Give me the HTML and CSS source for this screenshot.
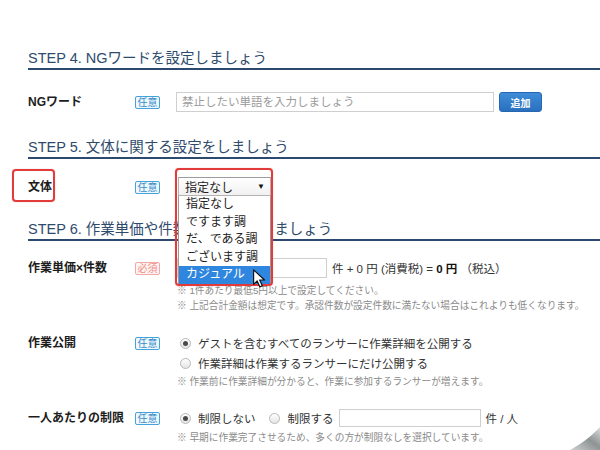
FILE: index.html
```html
<!DOCTYPE html>
<html lang="ja">
<head>
<meta charset="utf-8">
<title>STEP</title>
<link rel="stylesheet" href="styles.css">
</head>
<body>
<div class="page">
  <h2 class="step-title">STEP 4. NGワードを設定しましょう</h2>
  <div class="row row-ng">
    <div class="label">NGワード</div>
    <div class="badge-cell"><span class="badge">任意</span></div>
    <div class="field-line">
      <input class="text-input ng-input" type="text" placeholder="禁止したい単語を入力しましょう">
      <button class="btn-add" type="button">追加</button>
    </div>
  </div>

  <h2 class="step-title step-5">STEP 5. 文体に関する設定をしましょう</h2>
  <div class="row row-style">
    <div class="label">文体<span class="annot annot-label"></span></div>
    <div class="badge-cell"><span class="badge">任意</span></div>
    <div class="select-wrap">
      <div class="select"><span>指定なし</span><span class="caret">▼</span></div>
      <ul class="options">
        <li class="option">指定なし</li>
        <li class="option">ですます調</li>
        <li class="option">だ、である調</li>
        <li class="option">ございます調</li>
        <li class="option active">カジュアル</li>
      </ul>
      <span class="annot annot-select"></span>
      <svg class="cursor" width="14" height="21" viewBox="0 0 13 19"><path d="M1.5 1.5 L1.5 15 L4.8 11.8 L7.3 17.3 L9.6 16.3 L7.1 10.9 L11.6 10.9 Z" fill="#fff" stroke="#111" stroke-width="1.1" stroke-linejoin="round"/></svg>
    </div>
  </div>

  <h2 class="step-title step-6"><span class="title-left">STEP 6. 作業単価や件数</span><span class="title-hidden">などを設定し</span><span>ましょう</span></h2>
  <div class="row row-price">
    <div class="label">作業単価×件数</div>
    <div class="badge-cell"><span class="badge req">必須</span></div>
    <div class="field">
      <div class="field-line">
        <input class="text-input price-input" type="text">
        <span class="price-text">件 + 0 円 (消費税) = <b>0 円</b> （税込）</span>
      </div>
      <p class="note note-first">※ 1件あたり最低5円以上で設定してください。</p>
      <p class="note">※ 上記合計金額は想定です。承認件数が設定件数に満たない場合はこれよりも低くなります。</p>
    </div>
  </div>

  <div class="row row-public">
    <div class="label">作業公開</div>
    <div class="badge-cell"><span class="badge">任意</span></div>
    <div class="field">
      <div class="radio-line"><span class="radio on"></span>ゲストを含むすべてのランサーに作業詳細を公開する</div>
      <div class="radio-line"><span class="radio"></span>作業詳細は作業するランサーにだけ公開する</div>
      <p class="note note-tight">※ 作業前に作業詳細が分かると、作業に参加するランサーが増えます。</p>
    </div>
  </div>

  <div class="row row-limit">
    <div class="label">一人あたりの制限</div>
    <div class="badge-cell"><span class="badge">任意</span></div>
    <div class="field">
      <div class="radio-line">
        <span class="radio on"></span><span>制限しない</span>
        <span class="radio radio-second"></span><span>制限する</span>
        <input class="text-input limit-input" type="text">
        <span class="unit">件 / 人</span>
      </div>
      <p class="note note-limit">※ 早期に作業完了させるため、多くの方が制限なしを選択しています。</p>
    </div>
  </div>
</div>
<svg class="curl" width="31" height="23" viewBox="0 0 31 23">
  <defs>
    <linearGradient id="cg" x1="0" y1="1" x2="1" y2="0">
      <stop offset="0" stop-color="#cfd2d2"/>
      <stop offset="0.55" stop-color="#8e9393"/>
      <stop offset="1" stop-color="#dcdede"/>
    </linearGradient>
  </defs>
  <path d="M1 23 Q18 14 31 0 L31 23 Z" fill="url(#cg)"/>
</svg>
</body>
</html>
```

FILE: styles.css
```css
html, body {
  margin: 0;
  background: #fff;
}

body {
  font-family: "Liberation Sans", "Noto Sans CJK JP", sans-serif;
  font-size: 11.5px;
  color: #333;
  overflow: hidden;
}

.page {
  padding: 48px 0 0 28px;
}

.step-title {
  margin: 0;
  font-weight: normal;
  font-size: 14.5px;
  line-height: 20px;
  color: #2f4b6c;
  border-bottom: 2px solid #2c4a70;
  white-space: nowrap;
}

.title-hidden {
  visibility: hidden;
}

.step-5 { margin-top: 25px; }
.step-6 { margin-top: 22px; }

.row {
  display: grid;
  grid-template-columns: 107px 42px 1fr;
  align-items: start;
}

.row-ng { margin-top: 22px; }
.row-style { margin-top: 18px; position: relative; z-index: 5; }
.row-price { margin-top: 17px; }
.row-public { margin-top: 20px; }
.row-limit { margin-top: 19px; }

.label {
  position: relative;
  font-weight: bold;
  font-size: 12px;
  line-height: 20px;
  color: #1c1c1c;
  white-space: nowrap;
}

.badge-cell {
  height: 20px;
  display: flex;
  align-items: center;
}

.badge {
  display: inline-block;
  font-size: 10px;
  line-height: 11px;
  padding: 0 1.5px;
  border: 1.5px solid #45a2da;
  border-radius: 2px;
  color: #3a8cc9;
  background: #eff8fd;
}

.badge.req {
  border-color: #f2aaa3;
  color: #ee8e85;
  background: #fff4f3;
}

.field-line {
  display: flex;
  align-items: center;
  height: 20px;
}

.text-input {
  box-sizing: border-box;
  height: 20px;
  margin: 0;
  border: 1px solid #cfcfcf;
  padding: 0 5px;
  font-family: inherit;
  font-size: 11.5px;
  color: #333;
  background: #fff;
  outline: none;
}

.text-input::placeholder {
  color: #9a9a9a;
}

.ng-input {
  width: 318px;
  margin-left: -1px;
}

.btn-add {
  margin-left: 5px;
  width: 43px;
  height: 20px;
  padding: 0;
  border: 1px solid #2567b1;
  border-radius: 3px;
  background: linear-gradient(#3f8cd8, #2a70bf);
  color: #fff;
  font-family: inherit;
  font-size: 10px;
  font-weight: bold;
}

/* select + open list */
.select-wrap {
  position: relative;
  width: 93px;
  margin-left: 1px;
}

.select {
  box-sizing: border-box;
  height: 19px;
  border: 1px solid #b3b3b3;
  border-top-color: #9c9c9c;
  display: flex;
  justify-content: space-between;
  align-items: center;
  padding: 0 5px 0 6px;
  font-size: 12px;
  color: #222;
  background: linear-gradient(#fff, #f1f1f1);
}

.caret {
  font-size: 8px;
  color: #111;
}

.options {
  position: absolute;
  top: 19px;
  left: 0;
  right: 0;
  margin: 0;
  padding: 0;
  list-style: none;
  border: 1px solid #9a9a9a;
  border-top: none;
  background: #fff;
}

.option {
  line-height: 17.5px;
  padding-left: 7px;
  font-size: 12px;
  color: #222;
  white-space: nowrap;
}

.option.active {
  background: #2f86df;
  color: #fff;
}

.annot {
  position: absolute;
  box-sizing: border-box;
  border: 2px solid #e33a3a;
  border-radius: 4px;
  box-shadow: 0 0 1px rgba(200, 40, 40, 0.5);
  pointer-events: none;
}

.annot-label {
  left: -16px;
  top: -8px;
  width: 43px;
  height: 33px;
}

.annot-select {
  left: -3px;
  top: -9px;
  width: 98px;
  height: 118px;
}

.cursor {
  position: absolute;
  left: 74px;
  top: 91px;
}

/* price row */
.price-input {
  width: 150px;
}

.price-text {
  margin-left: 5px;
  color: #333;
  white-space: nowrap;
}

.price-text b {
  color: #111;
}

.note {
  margin: 0;
  font-size: 9.7px;
  line-height: 15px;
  color: #8a8a8a;
  white-space: nowrap;
}

.note-first { margin-top: 5px; }
.note-tight { margin-top: 1px; }
.note-limit { margin-top: 2px; }

/* radios */
.radio-line {
  display: flex;
  align-items: center;
  height: 20px;
  white-space: nowrap;
  color: #333;
}

.radio {
  position: relative;
  flex: none;
  box-sizing: border-box;
  width: 11px;
  height: 11px;
  margin: 0 7px 0 3px;
  border: 1px solid #b8b8b8;
  border-radius: 50%;
  background: linear-gradient(#fff, #e4e4e4);
}

.radio.on::after {
  content: "";
  position: absolute;
  left: 50%;
  top: 50%;
  width: 5px;
  height: 5px;
  margin: -2.5px 0 0 -2.5px;
  border-radius: 50%;
  background: #4a4a4a;
}

.radio-second {
  margin-left: 13px;
  margin-right: 8px;
}

.limit-input {
  width: 142px;
  height: 18px;
  margin-left: 5px;
}

.unit {
  margin-left: 5px;
}

.curl {
  position: fixed;
  right: 0;
  bottom: 0;
}
```
